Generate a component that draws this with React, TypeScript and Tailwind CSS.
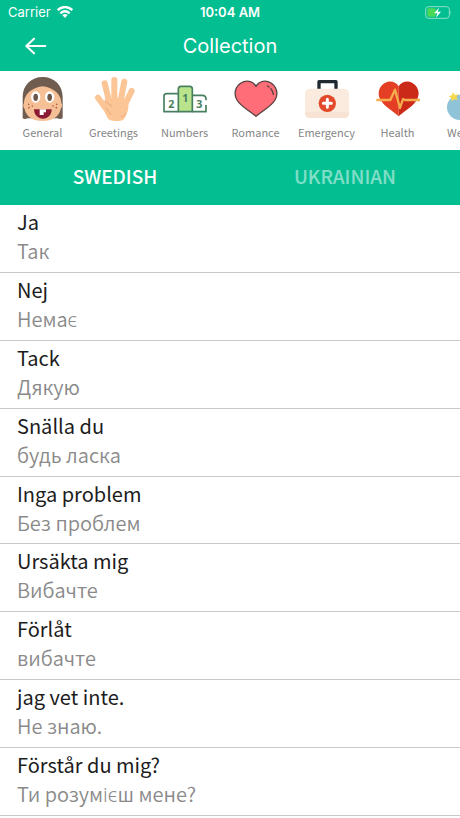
import { useState } from 'react';
import type { ReactNode } from 'react';

type Category = {
  label: string;
  icon: ReactNode;
};

type Phrase = {
  source: string;
  translation: string;
};

const phrases: Phrase[] = [
  { source: 'Ja', translation: 'Так' },
  { source: 'Nej', translation: 'Немає' },
  { source: 'Tack', translation: 'Дякую' },
  { source: 'Snälla du', translation: 'будь ласка' },
  { source: 'Inga problem', translation: 'Без проблем' },
  { source: 'Ursäkta mig', translation: 'Вибачте' },
  { source: 'Förlåt', translation: 'вибачте' },
  { source: 'jag vet inte.', translation: 'Не знаю.' },
  { source: 'Förstår du mig?', translation: 'Ти розумієш мене?' },
];

function Icon({ children }: { children: ReactNode }) {
  return (
    <svg viewBox="0 0 132 132" className="h-11 w-11" aria-hidden="true">
      {children}
    </svg>
  );
}

const categories: Category[] = [
  {
    label: 'General',
    icon: (
      <Icon>
        <path d="M5 124V60C5 24 31 0 65 0s60 24 60 60v64q-8 4-16 0H20q-8 4-15 0z" fill="#705d50" />
        <path d="M9 78C9 56 28 32 65 28c37 4 56 28 56 50 4 4 2 14-2 18-4 23-25 36-54 36S15 119 11 96c-4-4-6-14-2-18z" fill="#f5c095" />
        <ellipse cx="44" cy="60" rx="14" ry="17" fill="#fff" />
        <ellipse cx="86" cy="60" rx="14" ry="17" fill="#fff" />
        <ellipse cx="44" cy="61" rx="7" ry="11" fill="#6b564a" />
        <ellipse cx="86" cy="61" rx="7" ry="11" fill="#6b564a" />
        <path d="M39 97h53c0 17-11 28-26 28S39 114 39 97z" fill="#8b1a35" />
        <path d="M56 97h19v9h-7v8H56z" fill="#fff" />
        <g fill="#b5573c">
          <circle cx="23" cy="82" r="2.5" />
          <circle cx="34" cy="87" r="2.5" />
          <circle cx="24" cy="92" r="2.5" />
          <circle cx="107" cy="82" r="2.5" />
          <circle cx="96" cy="87" r="2.5" />
          <circle cx="106" cy="92" r="2.5" />
        </g>
      </Icon>
    ),
  },
  {
    label: 'Greetings',
    icon: (
      <Icon>
        <g stroke="#fcc596" strokeWidth="18" strokeLinecap="round" fill="none">
          <path d="M38 19L51 72" />
          <path d="M67 9v60" />
          <path d="M97 14L86 70" />
          <path d="M119 42L99 82" />
          <path d="M18 62l24 33" />
        </g>
        <path d="M40 62h55l13 10c4 22-2 36-8 48-5 12-15 12-28 12-14 0-22-2-27-12L34 96z" fill="#fcc596" />
        <g stroke="#dd9a70" strokeWidth="2" strokeLinecap="round" fill="none">
          <path d="M38 72l21 15" />
          <path d="M43 94l14 19" />
          <path d="M88 120q8-3 13-11" />
        </g>
      </Icon>
    ),
  },
  {
    label: 'Numbers',
    icon: (
      <Icon>
        <g stroke="#477f60" strokeWidth="5" strokeLinejoin="round" fill="none">
          <path d="M46 104H3V58q0-8 8-8h35" />
          <path d="M46 104V36q0-8 8-8h26q8 0 8 8v68z" fill="#b9e48c" />
          <path d="M88 55h30q11 0 11 11v4M129 84v20H88" />
        </g>
        <g fill="#477f60" fontFamily="'Open Sans', sans-serif" fontSize="32" fontWeight="700" textAnchor="middle">
          <text x="25" y="93">2</text>
          <text x="67" y="75">1</text>
          <text x="109" y="93">3</text>
        </g>
      </Icon>
    ),
  },
  {
    label: 'Romance',
    icon: (
      <Icon>
        <path
          d="M66 28C56 10 35 9 21 18 4 29-2 50 9 69c12 20 36 31 57 49 21-18 45-29 57-49 11-19 5-40-12-51-14-9-35-8-45 10z"
          fill="#ff6d79"
          stroke="#57433f"
          strokeWidth="4"
          strokeLinejoin="round"
        />
        <path d="M100 27q15 7 18 25" stroke="#57433f" strokeWidth="4" strokeDasharray="6 7 20" strokeLinecap="round" fill="none" />
      </Icon>
    ),
  },
  {
    label: 'Emergency',
    icon: (
      <Icon>
        <path d="M42 36V14h51v22" stroke="#212930" strokeWidth="10" strokeLinejoin="round" fill="none" />
        <rect x="0" y="35" width="132" height="88" rx="14" fill="#fbebde" />
        <path d="M0 104h132v5q0 14-14 14H14q-14 0-14-14z" fill="#f7e2d3" />
        <circle cx="67" cy="79" r="26" fill="#e3492b" />
        <path d="M67 67v24M55 79h24" stroke="#fff" strokeWidth="9" strokeLinecap="round" />
      </Icon>
    ),
  },
  {
    label: 'Health',
    icon: (
      <Icon>
        <path d="M68 28C60 14 42 10 28 17 10 26 3 47 12 66c11 22 38 35 56 52z" fill="#e43f25" />
        <path d="M68 28c8-14 26-18 40-11 18 9 25 30 16 49-11 22-38 35-56 52z" fill="#cc2a19" />
        <path d="M1 69h42l14-31 15 55 9-27 6 3h45" stroke="#f5ae4d" strokeWidth="7" strokeLinejoin="round" fill="none" />
      </Icon>
    ),
  },
  {
    label: 'Weather',
    icon: (
      <Icon>
        <circle cx="38" cy="91" r="38" fill="#8ec3d8" />
        <path d="M18 45l5 9 11-2-6 9 5 9-11-3-8 6-1-10-8-5 10-3z" fill="#f9d849" />
      </Icon>
    ),
  },
];

function StatusBar() {
  return (
    <div className="grid h-6 grid-cols-3 items-center px-2 font-['Inter',sans-serif] text-[13px] leading-4">
      <div className="flex items-center gap-1.5">
        <span>Carrier</span>
        <svg viewBox="0 0 48 36" className="h-3 w-4" fill="none" stroke="white" strokeWidth="7" aria-hidden="true">
          <path d="M2 12Q24-6 46 12" />
          <path d="M10 22q14-12 28 0" />
          <path d="M24 36l-8-9q8-6 16 0z" fill="white" stroke="none" />
        </svg>
      </div>
      <span className="text-center font-semibold">10:04 AM</span>
      <svg viewBox="0 0 81 39" className="h-[13px] w-[27px] justify-self-end" aria-hidden="true">
        <rect x="2" y="2" width="71" height="35" rx="9" fill="none" stroke="#8fe0c8" strokeWidth="3" />
        <rect x="7" y="7" width="25" height="25" rx="4" fill="#49d957" />
        <path d="M76 14q5 5 0 11z" fill="#8fe0c8" />
        <path d="M42 5L27 22h10l-4 13 15-18H38z" fill="white" />
      </svg>
    </div>
  );
}

export default function CollectionPage() {
  const [language, setLanguage] = useState<'swedish' | 'ukrainian'>('swedish');

  return (
    <main className="flex min-h-screen flex-col bg-white font-['Noto_Sans_CJK_SC','Noto_Sans',sans-serif]">
      <header className="bg-[#02be91] pb-[3px] text-white">
        <StatusBar />
        <div className="grid h-11 grid-cols-[72px_1fr_72px] items-center">
          <button className="flex justify-center" aria-label="Back">
            <svg viewBox="0 0 66 54" className="h-[18px] w-[22px]" fill="none" stroke="white" strokeWidth="6" strokeLinecap="round" strokeLinejoin="round" aria-hidden="true">
              <path d="M61 27H5M27 5L4 27l23 22" />
            </svg>
          </button>
          <h1 className="text-center font-['Inter',sans-serif] text-[20px] leading-6">Collection</h1>
        </div>
      </header>

      <nav className="flex overflow-hidden pt-[6px] pl-[7px]">
        {categories.map((c) => (
          <button key={c.label} className="flex h-[73px] w-[71px] shrink-0 flex-col items-center text-[11px] leading-[22px] text-[#868686]">
            {c.icon}
            {c.label}
          </button>
        ))}
      </nav>

      <div className="grid h-[55px] grid-cols-2 bg-[#02be91] pb-[2px] text-[19px] font-medium text-white">
        <button className={language === 'swedish' ? '' : 'opacity-50'} onClick={() => setLanguage('swedish')}>
          SWEDISH
        </button>
        <button className={language === 'ukrainian' ? '' : 'opacity-50'} onClick={() => setLanguage('ukrainian')}>
          UKRAINIAN
        </button>
      </div>

      <ul className="grid flex-1 auto-rows-fr pb-[2px]">
        {phrases.map((p) => (
          <li key={p.source} className="border-b border-[#c8c8c8] px-[17px] pt-[3px]">
            <p className="text-[20px] leading-7 text-[#1c1c1c]">{p.source}</p>
            <p className="text-[20px] leading-[30px] font-[350] text-[#8a8a8a]">{p.translation}</p>
          </li>
        ))}
      </ul>
    </main>
  );
}
